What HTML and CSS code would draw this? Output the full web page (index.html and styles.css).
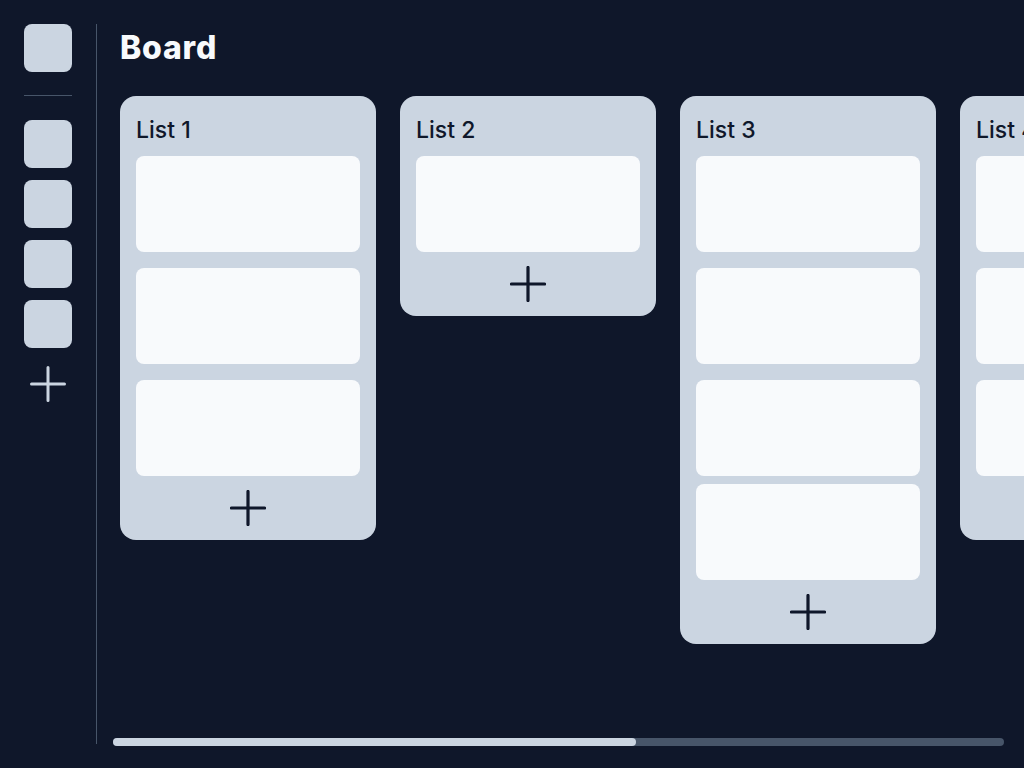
FILE: index.html
```html
<!DOCTYPE html>
<html lang="en">
<head>
    <meta charset="UTF-8">
    <meta name="viewport" content="width=device-width, initial-scale=1.0">
    <title>Board</title>
    <link rel="stylesheet" href="styles.css">
</head>
<body>
    <div class="app">
        <nav class="sidebar">
            <div class="tile"></div>
            <div class="divider"></div>
            <div class="tile-group">
                <div class="tile"></div>
                <div class="tile"></div>
                <div class="tile"></div>
                <div class="tile"></div>
            </div>
            <div class="side-add">
                <svg width="36" height="36" viewBox="0 0 36 36"><path d="M18 1.5v33M1.5 18h33" stroke="currentColor" stroke-width="3" stroke-linecap="round"/></svg>
            </div>
        </nav>
        <div class="rule"></div>

        <main class="main">
            <h1 class="title">Board</h1>
            <div class="board">
                <section class="list">
                    <h2 class="list-title">List 1</h2>
                    <div class="card"></div>
                    <div class="card"></div>
                    <div class="card"></div>
                    <div class="add">
                        <svg width="36" height="36" viewBox="0 0 36 36"><path d="M18 1.5v33M1.5 18h33" stroke="currentColor" stroke-width="3.2" stroke-linecap="round"/></svg>
                    </div>
                </section>
                <section class="list">
                    <h2 class="list-title">List 2</h2>
                    <div class="card"></div>
                    <div class="add">
                        <svg width="36" height="36" viewBox="0 0 36 36"><path d="M18 1.5v33M1.5 18h33" stroke="currentColor" stroke-width="3.2" stroke-linecap="round"/></svg>
                    </div>
                </section>
                <section class="list">
                    <h2 class="list-title">List 3</h2>
                    <div class="card"></div>
                    <div class="card"></div>
                    <div class="card"></div>
                    <div class="card card-tight"></div>
                    <div class="add">
                        <svg width="36" height="36" viewBox="0 0 36 36"><path d="M18 1.5v33M1.5 18h33" stroke="currentColor" stroke-width="3.2" stroke-linecap="round"/></svg>
                    </div>
                </section>
                <section class="list">
                    <h2 class="list-title">List 4</h2>
                    <div class="card"></div>
                    <div class="card"></div>
                    <div class="card"></div>
                    <div class="add">
                        <svg width="36" height="36" viewBox="0 0 36 36"><path d="M18 1.5v33M1.5 18h33" stroke="currentColor" stroke-width="3.2" stroke-linecap="round"/></svg>
                    </div>
                </section>
            </div>
            <div class="scrollbar">
                <div class="thumb" style="width: 58.7%"></div>
            </div>
        </main>
    </div>
</body>
</html>
```

FILE: styles.css
```css
body {
    margin: 0;
    background-color: #0f172a;
    color: #0f172a;
    font-family: Inter, "Noto Sans", sans-serif;
    overflow: hidden;
}
.app {
    display: flex;
    height: 100vh;
}
.sidebar {
    display: flex;
    flex-direction: column;
    align-items: center;
    width: 48px;
    padding: 24px 24px 0 24px;
}
.tile {
    width: 48px;
    height: 48px;
    background-color: #cbd5e1;
    border-radius: 8px;
}
.divider {
    width: 48px;
    height: 1px;
    margin: 23px 0 24px;
    background-color: #475569;
}
.tile-group {
    display: flex;
    flex-direction: column;
    gap: 12px;
}
.side-add {
    display: flex;
    justify-content: center;
    align-items: center;
    width: 36px;
    height: 36px;
    margin-top: 18px;
    color: #cbd5e1;
}
.rule {
    width: 1px;
    height: 720px;
    margin-top: 24px;
    background-color: #475569;
}
.main {
    flex: 1;
    min-width: 0;
    display: flex;
    flex-direction: column;
    padding: 24px 20px 22px 23px;
}
.title {
    margin: 0 0 24px;
    height: 48px;
    line-height: 48px;
    font-size: 32px;
    font-weight: 800;
    letter-spacing: 0.8px;
    color: #f8fafc;
}
.board {
    flex: 1;
    display: flex;
    align-items: flex-start;
    gap: 24px;
    margin-right: -20px;
    overflow: hidden;
}
.list {
    flex: 0 0 256px;
    box-sizing: border-box;
    display: flex;
    flex-direction: column;
    gap: 16px;
    padding: 16px;
    background-color: #cbd5e1;
    border-radius: 16px;
}
.list-title {
    margin: 0;
    height: 28px;
    line-height: 36px;
    font-size: 23px;
    font-weight: 500;
    color: #0f172a;
}
.card {
    height: 96px;
    background-color: #f8fafc;
    border-radius: 8px;
}
.card-tight {
    margin-top: -8px;
}
.add {
    display: flex;
    justify-content: center;
    align-items: center;
    height: 32px;
    color: #0f172a;
}
.scrollbar {
    height: 8px;
    margin-left: -7px;
    background-color: #475569;
    border-radius: 4px;
}
.thumb {
    height: 8px;
    background-color: #cbd5e1;
    border-radius: 4px;
}
```
